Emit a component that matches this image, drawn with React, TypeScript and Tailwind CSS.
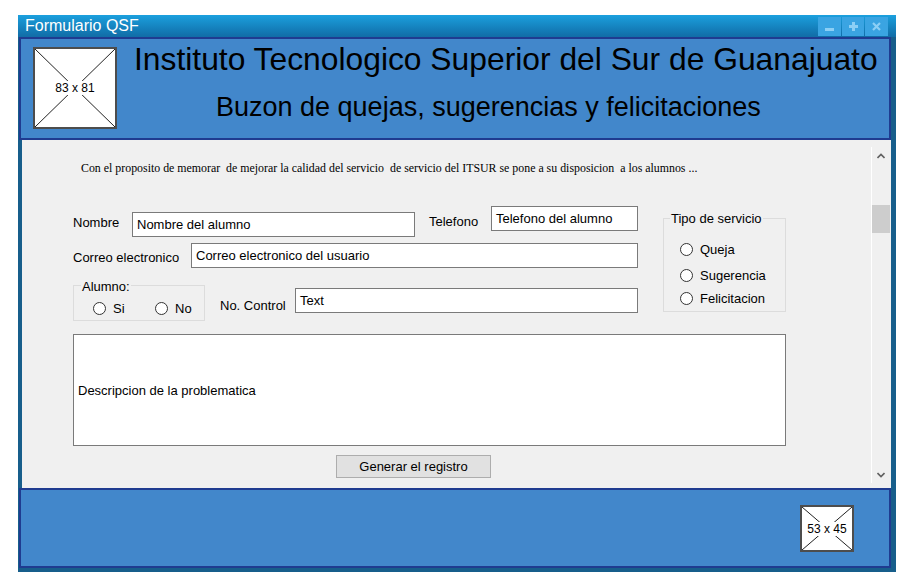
import React from "react";

const sans = { fontFamily: '"Liberation Sans", Arial, sans-serif' };

function Placeholder({ w, h, label }: { w: number; h: number; label: string }) {
  return (
    <div
      className="relative bg-white border-2 border-[#4d4d4d] flex items-center justify-center shrink-0"
      style={{ width: w, height: h }}
    >
      <svg className="absolute inset-0 w-full h-full" preserveAspectRatio="none" viewBox="0 0 100 100">
        <line x1="0" y1="0" x2="100" y2="100" stroke="#222" strokeWidth="1" vectorEffect="non-scaling-stroke" />
        <line x1="100" y1="0" x2="0" y2="100" stroke="#222" strokeWidth="1" vectorEffect="non-scaling-stroke" />
      </svg>
      <span className="relative bg-white px-[2px] text-[12px] leading-[14px] text-black" style={sans}>
        {label}
      </span>
    </div>
  );
}

function Radio({ label }: { label: string }) {
  return (
    <div className="flex items-center h-[15px]">
      <div className="w-[13px] h-[13px] rounded-full border border-[#333] bg-white shrink-0" />
      <span className="ml-[7px] text-[13px] leading-[15px] text-black">{label}</span>
    </div>
  );
}

function Input({ w, text, mt }: { w: string; text: string; mt: string }) {
  return (
    <div className={`${w} ${mt} h-[25px] border border-[#7a7a7a] bg-white flex items-center pl-[4px] shrink-0`}>
      <span className="text-[13px] leading-[15px] text-black whitespace-nowrap">{text}</span>
    </div>
  );
}

export default function App() {
  return (
    <div className="w-[915px] h-[582px] bg-white overflow-hidden pt-[15px] pl-[18px]" style={sans}>
      <div className="w-[878px] h-[557px] bg-[#175e8b] flex flex-col">
        {/* Title bar */}
        <div className="h-[22px] bg-gradient-to-b from-[#1ba0de] to-[#116ca6] flex items-center justify-between shrink-0">
          <span className="pl-[7px] text-[16px] leading-[18px] text-white">Formulario QSF</span>
          <div className="flex items-center h-[19px] mr-[8px] gap-[1px]">
            <div className="w-[23px] h-[19px] bg-[#3aa4e2] flex items-center justify-center">
              <div className="w-[9px] h-[3px] bg-[#8ccff5] mt-[6px]" />
            </div>
            <div className="w-[22px] h-[19px] bg-[#3aa4e2] flex items-center justify-center">
              <svg width="9" height="9" viewBox="0 0 9 9">
                <path d="M3 0h3v3h3v3H6v3H3V6H0V3h3z" fill="#8ccff5" />
              </svg>
            </div>
            <div className="w-[23px] h-[19px] bg-[#3aa4e2] flex items-center justify-center">
              <svg width="9" height="9" viewBox="0 0 9 9">
                <path d="M1 1L8 8M8 1L1 8" stroke="#8ccff5" strokeWidth="2.2" />
              </svg>
            </div>
          </div>
        </div>

        {/* Header */}
        <div className="ml-[1px] w-[872px] h-[103px] border-2 border-[#1f3b90] bg-[#4287cb] flex shrink-0">
          <div className="ml-[12px] mt-[8px]">
            <Placeholder w={84} h={82} label="83 x 81" />
          </div>
          <div className="flex flex-col">
            <div className="ml-[17px] mt-[2px] text-[31.8px] leading-[36px] text-black whitespace-nowrap">
              Instituto Tecnologico Superior del Sur de Guanajuato
            </div>
            <div className="ml-[99px] mt-[14px] text-[27px] leading-[32px] text-black whitespace-nowrap">
              Buzon de quejas, sugerencias y felicitaciones
            </div>
          </div>
        </div>

        {/* Content */}
        <div className="ml-[4px] w-[869px] h-[348px] bg-[#f0f0f0] flex shrink-0">
          <div className="w-[849px] flex flex-col">
            <div
              className="pt-[21px] pl-[59px] text-[11.88px] leading-[14px] text-black whitespace-pre"
              style={{ fontFamily: '"Liberation Serif", "Times New Roman", serif' }}
            >
              {"Con el proposito de memorar  de mejorar la calidad del servicio  de servicio del ITSUR se pone a su disposicion  a los alumnos ..."}
            </div>

            <div className="pl-[51px] mt-[31px] flex items-start">
              {/* left column */}
              <div className="w-[565px] flex flex-col">
                <div className="flex items-start h-[31px]">
                  <span className="w-[59px] mt-[9px] text-[13px] leading-[15px] shrink-0">Nombre</span>
                  <Input w="w-[283px]" mt="mt-[6px]" text="Nombre del alumno" />
                  <span className="ml-[14px] w-[62px] mt-[8px] text-[13px] leading-[15px] shrink-0">Telefono</span>
                  <Input w="w-[147px]" mt="mt-0" text="Telefono del alumno" />
                </div>
                <div className="flex items-start h-[25px] mt-[6px]">
                  <span className="w-[118px] mt-[7px] text-[13px] leading-[15px] shrink-0">Correo electronico</span>
                  <Input w="w-[447px]" mt="mt-0" text="Correo electronico del usuario" />
                </div>
                <div className="flex items-start h-[36px] mt-[17px]">
                  <div className="relative w-[132px] h-[36px] border border-[#dcdcdc] shrink-0">
                    <span className="absolute left-[7px] -top-[7px] px-[1px] bg-[#f0f0f0] text-[13px] leading-[15px]">
                      Alumno:
                    </span>
                    <div className="flex pl-[19px] mt-[15px]">
                      <div className="w-[62px]">
                        <Radio label="Si" />
                      </div>
                      <Radio label="No" />
                    </div>
                  </div>
                  <span className="ml-[15px] w-[75px] mt-[13px] text-[13px] leading-[15px] shrink-0">No. Control</span>
                  <Input w="w-[343px]" mt="mt-[3px]" text="Text" />
                </div>
              </div>

              {/* Tipo de servicio */}
              <div className="ml-[25px] mt-[12px] relative w-[123px] h-[94px] border border-[#dcdcdc] shrink-0">
                <span className="absolute left-[6px] -top-[8px] px-[1px] bg-[#f0f0f0] text-[13px] leading-[15px] whitespace-nowrap">
                  Tipo de servicio
                </span>
                <div className="flex flex-col pl-[16px]">
                  <div className="mt-[23px]">
                    <Radio label="Queja" />
                  </div>
                  <div className="mt-[11px]">
                    <Radio label="Sugerencia" />
                  </div>
                  <div className="mt-[8px]">
                    <Radio label="Felicitacion" />
                  </div>
                </div>
              </div>
            </div>

            <div className="ml-[51px] mt-[13px] w-[713px] h-[112px] border border-[#7a7a7a] bg-white flex items-center pl-[4px]">
              <span className="text-[13px] leading-[15px] text-black">Descripcion de la problematica</span>
            </div>

            <div className="ml-[314px] mt-[9px] w-[155px] h-[23px] bg-[#e1e1e1] border border-[#adadad] flex items-center justify-center">
              <span className="text-[13px] leading-[15px] text-black">Generar el registro</span>
            </div>
          </div>

          {/* Scrollbar */}
          <div className="w-[20px] shrink-0">
            <div className="mt-[7px] h-[336px] border-l border-white flex flex-col items-center">
              <svg className="mt-[6px] ml-[-2px]" width="8" height="6" viewBox="0 0 8 6">
                <path d="M0.5 5L4 1.5L7.5 5" stroke="#606060" strokeWidth="1.6" fill="none" />
              </svg>
              <div className="mt-[46px] w-[18px] h-[28px] bg-[#cdcdcd] ml-[-1px]" />
              <svg className="mt-auto mb-[5px] ml-[-2px]" width="8" height="6" viewBox="0 0 8 6">
                <path d="M0.5 1L4 4.5L7.5 1" stroke="#606060" strokeWidth="1.6" fill="none" />
              </svg>
            </div>
          </div>
        </div>

        {/* Footer */}
        <div className="ml-[1px] w-[872px] h-[80px] border-2 border-[#1f3b90] bg-[#4287cb] flex justify-end shrink-0">
          <div className="mt-[15px] mr-[35px]">
            <Placeholder w={54} h={47} label="53 x 45" />
          </div>
        </div>
      </div>
    </div>
  );
}
